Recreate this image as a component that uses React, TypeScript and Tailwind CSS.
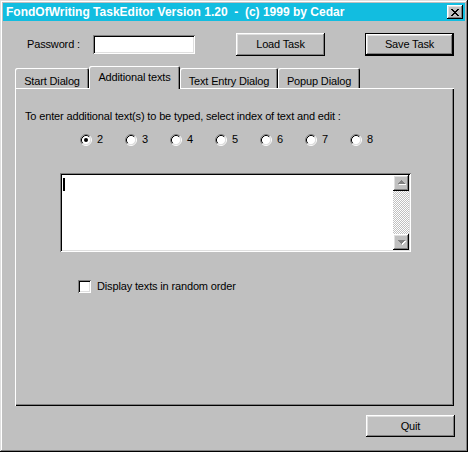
import React from "react"

const RAISED =
  "shadow-[inset_-1px_-1px_#000,inset_1px_1px_#fff,inset_-2px_-2px_#808080,inset_2px_2px_#dfdfdf]"
const SUNKEN =
  "shadow-[inset_1px_1px_#808080,inset_-1px_-1px_#fff,inset_2px_2px_#000,inset_-2px_-2px_#dfdfdf]"

const TABS = [
  { label: "Start Dialog", w: "w-[74px]" },
  { label: "Additional texts", w: "w-[91px]", active: true },
  { label: "Text Entry Dialog", w: "w-[98px]" },
  { label: "Popup Dialog", w: "w-[82px]" },
]

function Radio({ checked }: { checked?: boolean }) {
  return (
    <svg width="12" height="12" viewBox="0 0 12 12" className="shrink-0">
      <circle cx="6" cy="6" r="4.5" fill="#fff" />
      <path d="M2.11 9.89A5.5 5.5 0 0 1 9.89 2.11" fill="none" stroke="#808080" />
      <path d="M9.89 2.11A5.5 5.5 0 0 1 2.11 9.89" fill="none" stroke="#fff" />
      <path d="M2.82 9.18A4.5 4.5 0 0 1 9.18 2.82" fill="none" stroke="#000" />
      <path d="M9.18 2.82A4.5 4.5 0 0 1 2.82 9.18" fill="none" stroke="#dfdfdf" />
      {checked && <circle cx="6" cy="6" r="2" fill="#000" />}
    </svg>
  )
}

function ScrollButton({ down }: { down?: boolean }) {
  return (
    <div className={`w-[16px] h-[16px] bg-[#c0c0c0] flex items-center justify-center ${RAISED}`}>
      <svg width="9" height="6" viewBox="0 0 9 6" shapeRendering="crispEdges">
        {down ? (
          <>
            <path d="M2 2h7l-3.5 4z" fill="#fff" />
            <path d="M1 1h7l-3.5 4z" fill="#808080" />
          </>
        ) : (
          <>
            <path d="M2 5h7l-3.5 -4z" fill="#fff" />
            <path d="M1 4h7l-3.5 -4z" fill="#808080" />
          </>
        )}
      </svg>
    </div>
  )
}

export default function App() {
  return (
    <div
      className="w-[468px] h-[452px] bg-[#c0c0c0] p-[3px] flex flex-col text-black text-[11px] tracking-[-0.15px] shadow-[inset_-1px_-1px_#000,inset_1px_1px_#dfdfdf,inset_-2px_-2px_#808080,inset_2px_2px_#fff]"
      style={{ fontFamily: '"Liberation Sans", Arial, sans-serif' }}
    >
      {/* Titelbalk */}
      <div className="h-[18px] bg-[#12bde0] flex items-center pl-[3px] pr-[2px]">
        <span className="text-white font-bold text-[12px] tracking-normal whitespace-pre leading-none">
          FondOfWriting TaskEditor Version 1.20  -  (c) 1999 by Cedar
        </span>
        <div className={`ml-auto w-[16px] h-[14px] bg-[#c0c0c0] flex items-center justify-center ${RAISED}`}>
          <svg width="8" height="7" viewBox="0 0 8 7" shapeRendering="crispEdges">
            <path
              d="M0 0h2v1h1v1h2v-1h1v-1h2v1h-1v1h-1v1h-1v1h1v1h1v1h1v1h-2v-1h-1v-1h-2v1h-1v1h-2v-1h1v-1h1v-1h1v-1h-1v-1h-1v-1h-1z"
              fill="#000"
            />
          </svg>
        </div>
      </div>

      {/* Wachtwoord + knoppen */}
      <div className="flex items-center mt-[12px] h-[23px]">
        <span className="ml-[24px] w-[66px]">Password :</span>
        <div className={`w-[102px] h-[19px] bg-white ${SUNKEN}`} />
        <button className={`ml-[41px] w-[89px] h-[23px] bg-[#c0c0c0] ${RAISED}`}>
          Load Task
        </button>
        <button
          className={`ml-[40px] w-[89px] h-[23px] bg-[#c0c0c0] border border-black ${RAISED}`}
        >
          Save Task
        </button>
      </div>

      {/* Tabs */}
      <div className="flex items-end mt-[10px] ml-[12px] h-[22px] relative z-10">
        {TABS.map((t) =>
          t.active ? (
            <div
              key={t.label}
              className={`${t.w} -mb-[1px] h-[23px] bg-[#c0c0c0] rounded-t-[2px] flex justify-center pt-[3px] shadow-[inset_1px_1px_#fff,inset_-1px_0_#000,inset_-2px_0_#808080]`}
            >
              {t.label}
            </div>
          ) : (
            <div
              key={t.label}
              className={`${t.w} h-[20px] bg-[#c0c0c0] rounded-t-[2px] flex justify-center pt-[5px] shadow-[inset_1px_1px_#fff,inset_-1px_0_#000,inset_-2px_0_#808080]`}
            >
              {t.label}
            </div>
          )
        )}
      </div>

      {/* Tabpaneel */}
      <div className="ml-[12px] w-[439px] h-[318px] flex flex-col bg-[#c0c0c0] shadow-[inset_1px_1px_#fff,inset_-1px_-1px_#000,inset_-2px_-2px_#808080]">
        <p className="mt-[22px] ml-[10px] h-[13px] leading-[13px]">
          To enter additional text(s) to be typed, select index of text and edit :
        </p>
        <div className="flex mt-[10px] ml-[65px] h-[13px]">
          {[2, 3, 4, 5, 6, 7, 8].map((n) => (
            <div key={n} className="w-[45px] flex items-center gap-[5px]">
              <Radio checked={n === 2} />
              <span className="leading-[13px]">{n}</span>
            </div>
          ))}
        </div>
        <div className={`mt-[27px] ml-[45px] w-[351px] h-[79px] bg-white flex p-[2px] ${SUNKEN}`}>
          <div className="flex-1 pl-[1px] pt-[3px]">
            <div className="w-[2px] h-[13px] bg-black" />
          </div>
          <div className="w-[16px] flex flex-col">
            <ScrollButton />
            <div className="flex-1 bg-[repeating-conic-gradient(#c0c0c0_0_25%,#fff_0_50%)] bg-[length:2px_2px]" />
            <ScrollButton down />
          </div>
        </div>
        <div className="flex items-center mt-[28px] ml-[63px] h-[13px]">
          <div className={`w-[13px] h-[13px] bg-white ${SUNKEN}`} />
          <span className="ml-[6px]">Display texts in random order</span>
        </div>
      </div>

      {/* Afsluiten */}
      <div className="flex justify-end mt-[9px] mr-[10px]">
        <button className={`w-[89px] h-[22px] bg-[#c0c0c0] ${RAISED}`}>Quit</button>
      </div>
    </div>
  )
}
